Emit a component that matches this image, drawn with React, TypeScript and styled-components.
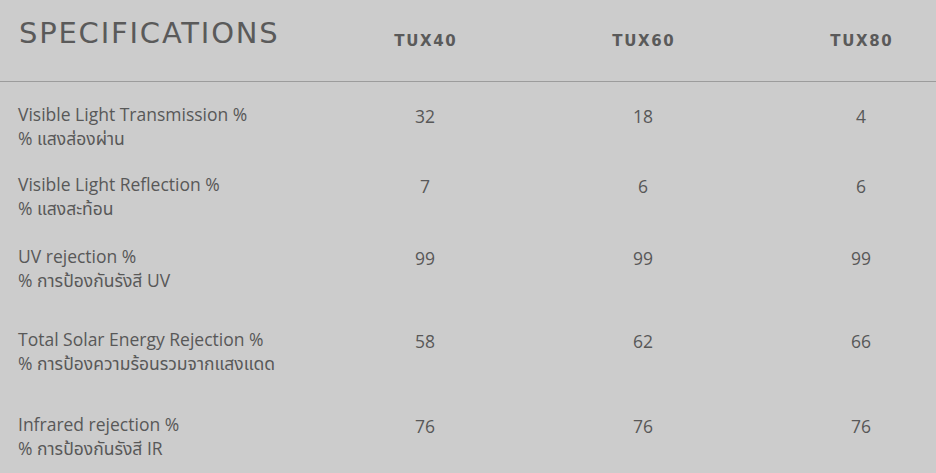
import React from "react";
import styled, { createGlobalStyle } from "styled-components";

const Global = createGlobalStyle`
  html, body { margin: 0; padding: 0; background: #cccccc; overflow: hidden; }
  body { font-family: "Open Sans", "Noto Sans", "Noto Sans Thai", sans-serif; color: #585858; }
`;

const Page = styled.div`
  width: 936px;
  height: 473px;
  background: #cccccc;
  overflow: hidden;
`;

const Grid = styled.div`
  display: grid;
  grid-template-columns: 316px 218px 218px 218px;
  width: 970px;
`;

const HeaderRow = styled.div`
  display: contents;
`;

const Title = styled.h1`
  margin: 0;
  padding: 15px 0 0 19px;
  height: 82px;
  box-sizing: border-box;
  border-bottom: 1px solid #9c9c9c;
  font-family: "DejaVu Sans", sans-serif;
  font-weight: 400;
  font-size: 29px;
  letter-spacing: 1.8px;
  color: #5a5a5a;
  line-height: 36px;
  white-space: nowrap;
`;

const ModelHead = styled.div`
  height: 82px;
  box-sizing: border-box;
  border-bottom: 1px solid #9c9c9c;
  padding: 31px 0 0 1.6px;
  text-align: center;
  font-family: "DejaVu Sans", sans-serif;
  font-weight: 700;
  font-size: 15px;
  letter-spacing: 1.6px;
  line-height: 20px;
  color: #5a5a5a;
`;

const Spacer = styled.div`
  grid-column: 1 / -1;
  height: 20px;
`;

const Label = styled.div<{ $h: number }>`
  height: ${(p) => p.$h}px;
  padding-left: 18px;
  box-sizing: border-box;
  font-size: 17.5px;
  line-height: 24px;
  white-space: nowrap;
`;

const Value = styled.div<{ $h: number }>`
  height: ${(p) => p.$h}px;
  padding-top: 2px;
  box-sizing: border-box;
  text-align: center;
  font-size: 17.5px;
  line-height: 24px;
`;

const rows = [
  { en: "Visible Light Transmission %", th: "% แสงส่องผ่าน", v: ["32", "18", "4"], h: 70 },
  { en: "Visible Light Reflection %", th: "% แสงสะท้อน", v: ["7", "6", "6"], h: 72 },
  { en: "UV rejection %", th: "% การป้องกันรังสี UV", v: ["99", "99", "99"], h: 83 },
  { en: "Total Solar Energy Rejection %", th: "% การป้องความร้อนรวมจากแสงแดด", v: ["58", "62", "66"], h: 85 },
  { en: "Infrared rejection %", th: "% การป้องกันรังสี IR", v: ["76", "76", "76"], h: 60 },
];

export default function App() {
  return (
    <Page>
      <Global />
      <Grid>
        <HeaderRow>
          <Title>SPECIFICATIONS</Title>
          <ModelHead>TUX40</ModelHead>
          <ModelHead>TUX60</ModelHead>
          <ModelHead>TUX80</ModelHead>
        </HeaderRow>
        <Spacer />
        {rows.map((r, i) => (
          <React.Fragment key={i}>
            <Label $h={r.h}>
              {r.en}
              <br />
              {r.th}
            </Label>
            {r.v.map((v, j) => (
              <Value key={j} $h={r.h}>
                {v}
              </Value>
            ))}
          </React.Fragment>
        ))}
      </Grid>
    </Page>
  );
}
